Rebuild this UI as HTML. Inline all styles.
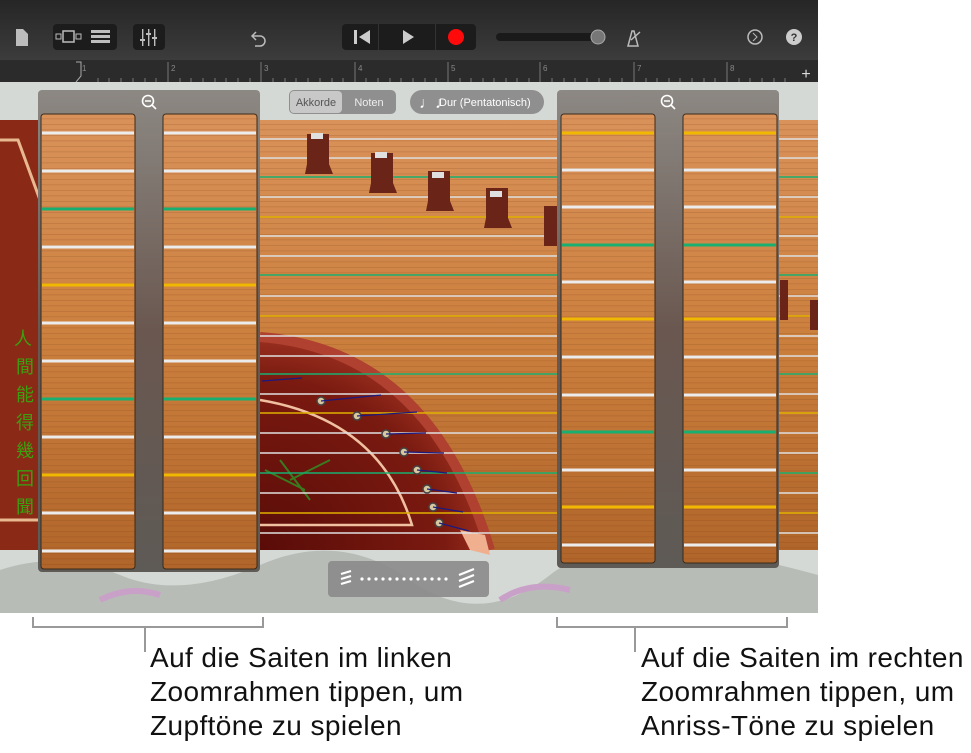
<!DOCTYPE html>
<html><head><meta charset="utf-8"><style>
html,body{margin:0;padding:0;background:#fff;width:971px;height:753px;overflow:hidden;font-family:"Liberation Sans",sans-serif}
.t{position:absolute;font-size:28px;letter-spacing:0.4px;line-height:34px;color:#111;white-space:nowrap}
</style></head><body>
<svg width="971" height="753" style="position:absolute;left:0;top:0" xmlns="http://www.w3.org/2000/svg">
<defs>
<linearGradient id="tb" x1="0" y1="0" x2="0" y2="1"><stop offset="0" stop-color="#262626"/><stop offset="1" stop-color="#3c3c3c"/></linearGradient>
<linearGradient id="wood" x1="0" y1="0" x2="0" y2="1"><stop offset="0" stop-color="#d9925a"/><stop offset="0.5" stop-color="#cc803e"/><stop offset="1" stop-color="#b0652a"/></linearGradient>
<pattern id="grain" width="8" height="11" patternUnits="userSpaceOnUse"><rect y="3" width="8" height="1" fill="#7a3e14" opacity="0.18"/><rect y="8" width="8" height="1.5" fill="#7a3e14" opacity="0.12"/></pattern>
<linearGradient id="frame" x1="0" y1="0" x2="0" y2="1"><stop offset="0" stop-color="#8c8883"/><stop offset="0.5" stop-color="#6a5850"/><stop offset="1" stop-color="#5e5a56"/></linearGradient>
<radialGradient id="red" cx="0" cy="1" r="1"><stop offset="0" stop-color="#5a0c08"/><stop offset="0.8" stop-color="#7a1a10"/><stop offset="1" stop-color="#9a3020"/></radialGradient>
<clipPath id="img"><rect x="0" y="82" width="818" height="531"/></clipPath>
</defs>
<rect x="0" y="0" width="818" height="60" fill="url(#tb)"/>
<rect x="0" y="60" width="818" height="22" fill="#2b2b2b"/>
<g fill="#bdbdbd">
<path d="M16 29h7l5 5v12h-12z"/>
<rect x="53" y="24" width="64" height="26" rx="4" fill="#1c1c1c"/>
<rect x="63" y="31" width="11" height="11" fill="none" stroke="#bbb" stroke-width="1.5"/><rect x="56" y="34" width="5" height="5" fill="none" stroke="#bbb"/><rect x="76" y="34" width="5" height="5" fill="none" stroke="#bbb"/>
<rect x="91" y="30" width="19" height="3"/><rect x="91" y="35" width="19" height="3"/><rect x="91" y="40" width="19" height="3"/>
<rect x="133" y="24" width="32" height="26" rx="4" fill="#1c1c1c"/>
<rect x="142" y="29" width="1.4" height="17"/><rect x="148" y="29" width="1.4" height="17"/><rect x="154" y="29" width="1.4" height="17"/>
<rect x="140" y="39" width="5" height="2"/><rect x="146" y="33" width="5" height="2"/><rect x="152" y="37" width="5" height="2"/>
</g>
<path d="M256 32l-4 4 4 4M252 36h8a5 5 0 0 1 0 10h-5" fill="none" stroke="#bbb" stroke-width="1.5"/>
<rect x="342" y="24" width="134" height="26" rx="4" fill="#1c1c1c"/>
<rect x="378" y="24" width="1" height="26" fill="#333"/><rect x="435" y="24" width="1" height="26" fill="#333"/>
<rect x="354" y="30" width="3" height="14" fill="#ccc"/><path d="M370 30v14l-11-7z" fill="#ccc"/>
<path d="M403 30v14l11-7z" fill="#ccc"/>
<circle cx="456" cy="37" r="8" fill="#ff0a0a"/>
<rect x="496" y="33" width="100" height="8" rx="4" fill="#1a1a1a"/>
<circle cx="598" cy="37" r="7" fill="#777" stroke="#aaa"/>
<path d="M628 46l4-15h2l4 15zM631 40l9-8" fill="none" stroke="#bbb" stroke-width="1.5"/>
<circle cx="755" cy="37" r="7" fill="none" stroke="#bbb" stroke-width="1.5"/><path d="M753 33l4 4-4 4" fill="none" stroke="#bbb"/>
<circle cx="794" cy="37" r="8" fill="#ccc"/><text x="794" y="41" font-size="11" font-weight="bold" text-anchor="middle" fill="#333">?</text>
<g fill="#888" font-size="8" font-family="Liberation Sans">
<path d="M76 62h5v14l-5 6" fill="none" stroke="#aaa"/>
<text x="82" y="71">1</text><text x="171" y="71">2</text><text x="264" y="71">3</text><text x="358" y="71">4</text><text x="451" y="71">5</text><text x="543" y="71">6</text><text x="637" y="71">7</text><text x="730" y="71">8</text>
</g>
<g stroke="#777" stroke-width="1">
<path d="M168 62v20M261 62v20M355 62v20M448 62v20M540 62v20M634 62v20M727 62v20"/>
<path d="M98 78v4M109 78v4M121 78v4M133 78v4M145 78v4M156 78v4M180 78v4M191 78v4M203 78v4M215 78v4M226 78v4M238 78v4M250 78v4M273 78v4M285 78v4M296 78v4M308 78v4M320 78v4M332 78v4M343 78v4M366 78v4M378 78v4M390 78v4M401 78v4M413 78v4M425 78v4M436 78v4M460 78v4M471 78v4M483 78v4M494 78v4M506 78v4M517 78v4M529 78v4M552 78v4M564 78v4M575 78v4M587 78v4M599 78v4M610 78v4M622 78v4M646 78v4M657 78v4M669 78v4M680 78v4M692 78v4M704 78v4M715 78v4M739 78v4M750 78v4M762 78v4M774 78v4M785 78v4"/>
</g>
<text x="806" y="79" font-size="16" fill="#ddd" text-anchor="middle">+</text>
<g clip-path="url(#img)">
<rect x="0" y="82" width="818" height="531" fill="#d5d9d5"/>
<path d="M0 570q60-20 120 5t140-10 150 15 140-5 268 0v40H0z" fill="#b8bcb6"/>
<path d="M100 600q30-15 60-5M500 600q30-20 70-10" stroke="#c9a0c8" stroke-width="6" fill="none"/>
<rect x="0" y="120" width="818" height="430" fill="url(#wood)"/>
<rect x="0" y="120" width="818" height="430" fill="url(#grain)"/>
<rect x="0" y="120" width="40" height="430" fill="#8a2a16"/>
<path d="M0 140h18l22 60" stroke="#e8b890" stroke-width="3" fill="none"/>
<path d="M0 520h40" stroke="#e8b890" stroke-width="3"/>
<text x="16" y="345" font-size="18" fill="#3aa010" font-family="Noto Sans CJK SC,sans-serif"><tspan x="14" dy="0">人</tspan><tspan x="16" dy="28">間</tspan><tspan x="16" dy="28">能</tspan><tspan x="16" dy="28">得</tspan><tspan x="16" dy="28">幾</tspan><tspan x="16" dy="28">回</tspan><tspan x="16" dy="28">聞</tspan></text>
<path d="M260 337Q430 350 490 550H260z" fill="url(#red)"/>
<path d="M260 337Q430 350 490 550" stroke="#b04030" stroke-width="10" fill="none"/>
<path d="M260 400Q380 420 412 525H260" stroke="#f0c0a0" stroke-width="2.5" fill="none"/>
<path d="M265 470l40 20M280 460l30 40M290 480l40-20" stroke="#3a7a20" stroke-width="2"/>
<path d="M460 530l25 5 5 20-20-5z" fill="#f0b090"/>
<g stroke-width="1.6">
<path d="M260 139H557M260 158H557M260 197H557M260 236H557M260 256H557M260 296H557M260 336H557M260 356H557M260 394H557M260 433H557M260 453H557M260 493H557M260 533H557M779 139H818M779 158H818M779 197H818M779 236H818M779 256H818M779 296H818M779 336H818M779 356H818M779 394H818M779 433H818M779 453H818M779 493H818M779 533H818" stroke="#e0e0e0"/>
<path d="M260 177H557M260 275H557M260 374H557M260 473H557M779 177H818M779 275H818M779 374H818M779 473H818" stroke="#18b070"/>
<path d="M260 217H557M260 316H557M260 413H557M260 513H557M779 217H818M779 316H818M779 413H818M779 513H818" stroke="#e0b000"/>
</g>
<g fill="#6a2418">
<path d="M307 134h22v30l4 10h-28l2-10z"/><path d="M371 153h22v30l4 10h-28l2-10z"/><path d="M428 171h22v30l4 10h-28l2-10z"/><path d="M486 188h22v30l4 10h-28l2-10z"/><path d="M544 206h14v40h-14z"/><path d="M780 280h8v40h-8z"/><path d="M810 300h8v30h-8z"/>
</g>
<g fill="#e0e0e0"><rect x="311" y="133" width="12" height="6"/><rect x="375" y="152" width="12" height="6"/><rect x="432" y="172" width="12" height="6"/><rect x="490" y="191" width="12" height="6"/></g>
<g fill="#d8c8a0" stroke="#444" stroke-width="1.5">
<circle cx="321" cy="401" r="4"/><circle cx="357" cy="416" r="4"/><circle cx="386" cy="434" r="4"/><circle cx="404" cy="452" r="4"/><circle cx="417" cy="470" r="4"/><circle cx="427" cy="489" r="4"/><circle cx="433" cy="507" r="4"/><circle cx="439" cy="523" r="4"/>
</g>
<g stroke="#1a1a80" stroke-width="1.2"><path d="M321 401l60-6M357 416l60-4M386 434l40-1M404 452l40 1M417 470l30 3M427 489l30 4M433 507l30 5M439 523l30 8M262 381l40-3"/></g>
<rect x="38" y="90" width="222" height="482" rx="4" fill="url(#frame)"/>
<rect x="557" y="90" width="222" height="478" rx="4" fill="url(#frame)"/>
<g>
<rect x="41" y="114" width="94" height="455" rx="3" fill="url(#wood)" stroke="#3a2a1a"/>
<rect x="163" y="114" width="94" height="455" rx="3" fill="url(#wood)" stroke="#3a2a1a"/>
<rect x="561" y="114" width="94" height="449" rx="3" fill="url(#wood)" stroke="#3a2a1a"/>
<rect x="683" y="114" width="94" height="449" rx="3" fill="url(#wood)" stroke="#3a2a1a"/>
<rect x="41" y="114" width="94" height="455" fill="url(#grain)"/><rect x="163" y="114" width="94" height="455" fill="url(#grain)"/>
<rect x="561" y="114" width="94" height="449" fill="url(#grain)"/><rect x="683" y="114" width="94" height="449" fill="url(#grain)"/>
</g>
<g stroke-width="3">
<path d="M42 133H134M164 133H256M42 171H134M164 171H256M42 247H134M164 247H256M42 323H134M164 323H256M42 361H134M164 361H256M42 437H134M164 437H256M42 513H134M164 513H256M42 551H134M164 551H256" stroke="#ececec"/>
<path d="M42 209H134M164 209H256M42 399H134M164 399H256" stroke="#18b070"/>
<path d="M42 285H134M164 285H256M42 475H134M164 475H256" stroke="#f0b800"/>
<path d="M562 170H654M684 170H776M562 207H654M684 207H776M562 282H654M684 282H776M562 357H654M684 357H776M562 395H654M684 395H776M562 470H654M684 470H776M562 545H654M684 545H776" stroke="#ececec"/>
<path d="M562 245H654M684 245H776M562 432H654M684 432H776" stroke="#18b070"/>
<path d="M562 133H654M684 133H776M562 319H654M684 319H776M562 507H654M684 507H776" stroke="#f0b800"/>
</g>
<g fill="none" stroke="#fff" stroke-width="1.6"><circle cx="148" cy="101" r="5.5"/><path d="M152 105l4 4M145 101h6"/><circle cx="667" cy="101" r="5.5"/><path d="M671 105l4 4M664 101h6"/></g>
<rect x="289" y="90" width="107" height="24" rx="5" fill="#8f8f8f"/>
<rect x="290" y="91" width="52" height="22" rx="4" fill="#c8c8c8"/>
<text x="316" y="106" font-size="11" text-anchor="middle" fill="#555">Akkorde</text>
<text x="369" y="106" font-size="11" text-anchor="middle" fill="#eee">Noten</text>
<rect x="410" y="90" width="134" height="24" rx="12" fill="#8f8f8f"/>
<text x="419" y="108" font-size="16" fill="#fff">♩♩</text>
<text x="439" y="106" font-size="11" fill="#fff">Dur (Pentatonisch)</text>
<rect x="328" y="561" width="161" height="36" rx="4" fill="#8a8a8a" opacity="0.9"/>
<path d="M341 574l10-3M341 579l10-3M341 584l10-3M459 575l15-6M459 581l15-6M459 587l15-6" stroke="#fff" stroke-width="2.2"/>
<g fill="#fff"><circle cx="362" cy="579" r="1.6"/><circle cx="369" cy="579" r="1.6"/><circle cx="376" cy="579" r="1.6"/><circle cx="383" cy="579" r="1.6"/><circle cx="390" cy="579" r="1.6"/><circle cx="397" cy="579" r="1.6"/><circle cx="404" cy="579" r="1.6"/><circle cx="411" cy="579" r="1.6"/><circle cx="418" cy="579" r="1.6"/><circle cx="425" cy="579" r="1.6"/><circle cx="432" cy="579" r="1.6"/><circle cx="439" cy="579" r="1.6"/><circle cx="446" cy="579" r="1.6"/></g>
</g>
<path d="M33 617v10H263v-10M145 627v25M557 617v10H787v-10M635 627v25" stroke="#999" stroke-width="2" fill="none"/>
</svg>
<div class="t" style="left:150px;top:641px">Auf die Saiten im linken<br>Zoomrahmen tippen, um<br>Zupftöne zu spielen</div>
<div class="t" style="left:641px;top:641px">Auf die Saiten im rechten<br>Zoomrahmen tippen, um<br>Anriss-Töne zu spielen</div>
</body></html>
